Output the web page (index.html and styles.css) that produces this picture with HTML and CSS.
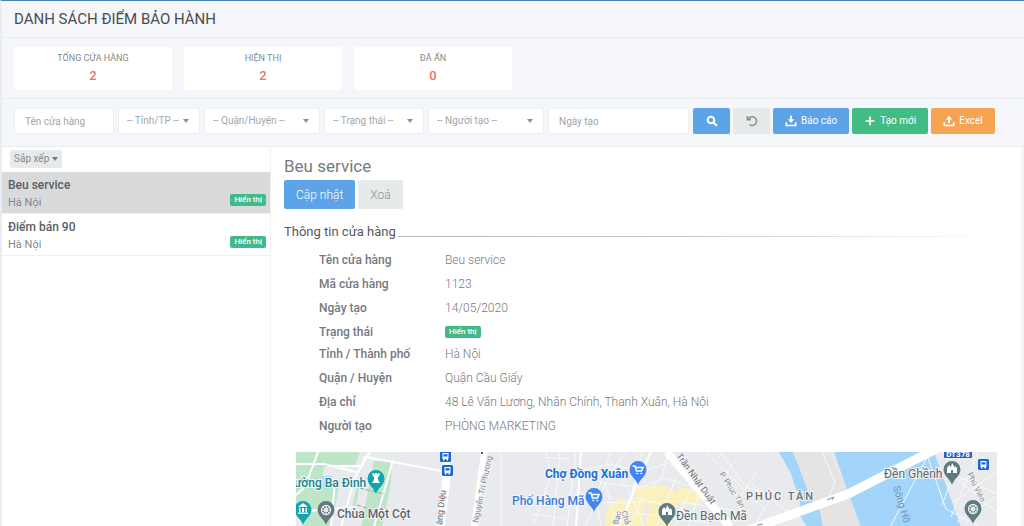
FILE: index.html
```html
<!DOCTYPE html>
<html lang="vi">
<head>
<meta charset="utf-8">
<meta name="viewport" content="width=device-width, initial-scale=1">
<title>Danh sách điểm bảo hành</title>
<link rel="stylesheet" href="styles.css">
</head>
<body>
<div class="app">
  <header class="page-header"><h1>DANH SÁCH ĐIỂM BẢO HÀNH</h1></header>

  <section class="stats">
    <div class="stat"><span class="stat-label">TỔNG CỬA HÀNG</span><strong class="stat-value">2</strong></div>
    <div class="stat"><span class="stat-label">HIỆN THỊ</span><strong class="stat-value">2</strong></div>
    <div class="stat"><span class="stat-label">ĐÃ ẨN</span><strong class="stat-value">0</strong></div>
  </section>

  <form class="filters">
    <input class="field w-100" type="text" placeholder="Tên cửa hàng" aria-label="Tên cửa hàng">
    <span class="select w-82"><select class="field" aria-label="Tỉnh/TP"><option>-- Tỉnh/TP --</option></select></span>
    <span class="select w-116"><select class="field" aria-label="Quận/Huyện"><option>-- Quận/Huyện --</option></select></span>
    <span class="select w-100"><select class="field" aria-label="Trạng thái"><option>-- Trạng thái --</option></select></span>
    <span class="select w-116"><select class="field" aria-label="Người tạo"><option>-- Người tạo --</option></select></span>
    <input class="field w-date" type="text" placeholder="Ngày tạo" aria-label="Ngày tạo">
    <div class="actions">
      <button class="btn btn-blue btn-icon" type="submit" aria-label="Tìm kiếm">
        <svg class="icon" viewBox="0 0 12 12"><circle cx="5" cy="5" r="3.3" fill="none" stroke="currentColor" stroke-width="1.9"/><path d="M7.6 7.6l2.7 2.7" stroke="currentColor" stroke-width="2.2" stroke-linecap="round"/></svg>
      </button>
      <button class="btn btn-gray btn-icon" type="reset" aria-label="Đặt lại">
        <svg class="icon" viewBox="0 0 12 12" fill="none" stroke="currentColor" stroke-width="1.6"><path d="M2.2 4.2A4.4 4.4 0 1 1 3.4 9.6"/><path d="M1.4 1v3.6H5"/></svg>
      </button>
      <button class="btn btn-blue" type="button">
        <svg class="icon" viewBox="0 0 12 12"><path d="M5 .8h2v3.500h2.300L6 7.900 2.700 4.300H5z" fill="currentColor"/><path d="M1.300 7.200v3.300h9.400V7.200" fill="none" stroke="currentColor" stroke-width="1.700"/></svg>Báo cáo
      </button>
      <button class="btn btn-green" type="button">
        <svg class="icon" viewBox="0 0 12 12"><path d="M6 1.500v9M1.500 6h9" stroke="currentColor" stroke-width="1.700"/></svg>Tạo mới
      </button>
      <button class="btn btn-orange" type="button">
        <svg class="icon" viewBox="0 0 12 12"><path d="M5 7.900h2V4.400h2.300L6 .8 2.700 4.400H5z" fill="currentColor"/><path d="M1.300 7.200v3.300h9.400V7.200" fill="none" stroke="currentColor" stroke-width="1.700"/></svg>Excel
      </button>
    </div>
  </form>

  <main class="content">
    <aside class="sidebar">
      <div class="sort"><button class="sort-btn" type="button">Sắp xếp</button></div>
      <ul class="stores">
        <li class="store active"><a class="store-link" href="#beu"><span class="store-name">Beu service</span><span class="store-meta">Hà Nội<span class="badge">Hiển thị</span></span></a></li>
        <li class="store"><a class="store-link" href="#diemban"><span class="store-name">Điểm bán 90</span><span class="store-meta">Hà Nội<span class="badge">Hiển thị</span></span></a></li>
      </ul>
    </aside>

    <section class="detail">
      <h2>Beu service</h2>
      <div class="detail-actions">
        <button class="btn btn-blue btn-lg" type="button">Cập nhật</button>
        <button class="btn btn-gray btn-lg" type="button">Xoá</button>
      </div>
      <h3>Thông tin cửa hàng</h3>
      <dl class="info">
        <div class="row"><dt>Tên cửa hàng</dt><dd>Beu service</dd></div>
        <div class="row"><dt>Mã cửa hàng</dt><dd>1123</dd></div>
        <div class="row"><dt>Ngày tạo</dt><dd>14/05/2020</dd></div>
        <div class="row row-status"><dt>Trạng thái</dt><dd><span class="badge">Hiển thị</span></dd></div>
        <div class="row"><dt>Tỉnh / Thành phố</dt><dd>Hà Nội</dd></div>
        <div class="row"><dt>Quận / Huyện</dt><dd>Quận Cầu Giấy</dd></div>
        <div class="row"><dt>Địa chỉ</dt><dd>48 Lê Văn Lương, Nhân Chính, Thanh Xuân, Hà Nội</dd></div>
        <div class="row"><dt>Người tạo</dt><dd>PHÒNG MARKETING</dd></div>
      </dl>

      <svg class="map" viewBox="0 0 701 75" role="img" aria-label="Bản đồ">
        <defs>
          <path id="pin" d="M0 0C-1-5-8.500-9-8.500-15.500a8.500 8.500 0 0 1 17 0C8.500-9 1-5 0 0z"/>
          <path id="cart" d="M-5-4h2l1.500 5h5L5-2.500h-7.500M-1 3.500h.5M3 3.500h.5" fill="none" stroke="#fff" stroke-width="1.500" stroke-linecap="round"/>
          <g id="bus"><rect width="11" height="11" rx="1.500" fill="#1967d2"/><path d="M2.500 2h6v6h-6zM3 8h1.500v1.500H3zM6.500 8H8v1.500H6.500z" fill="#fff"/><path d="M3.500 3.200h4v2.300h-4z" fill="#1967d2"/></g>
          <g id="temple" fill="#fff"><path d="M-5 3v-5l2-3 2 2 1-4 2 3v2l1-2 2 2v5h-4V0h-2v3z"/></g>
          <g id="wheel" fill="none" stroke="#e9eeee"><circle r="4.500" stroke-width="1.300"/><circle r="1.500"/><path d="M-4.500 0h9M0-4.500v9M-3.200-3.200l6.400 6.400M-3.200 3.200l6.400-6.400"/></g>
        </defs>
        <rect class="land" width="701" height="75"/>
        <g class="park">
          <path d="M0 0h64l-5 14-31 1-9 42-19 2z"/>
          <path d="M78 9h18l-1 21-9 45H65z"/>
          <path d="M0 30h64l-4 26-26 19H8L0 55z"/>
        </g>
        <path d="M25 24h11v10l-6 3-6-5z" fill="#b7dcf5"/>
        <path d="M47 14h18L52 75H35z" fill="#e8eaed"/>
        <g class="sand">
          <path d="M494 0h40l34 75H524l-10-30z"/>
        </g>
        <g class="water">
          <path d="M483 0h14l9 23 9 25 8 6 4 21h-16l-8-13 1-13-9-27z"/>
          <path d="M538 0h100l27 75H565L549 32z"/>
        </g>
        <g class="district">
          <path d="M340 35l28-2 16 10-3 12-42-3zM323 46l26 4-3 25h-37l2-18zM354 54l26 3-6 18h-25zM381 34l29 7-8 13-20-4z"/>
        </g>
        <g class="roads minor">
          <path d="M205 0v75M257 75l7-75M280 0l-9 75M246 5l28 2M250 20l41 1 18 11M240 45l57 6 80-2 60 9M236 62l35 5M305 75l-5-28 14-47M330 0l-15 21-14 27M301 48l-12 27M309 30l12 45M320 18l18 31 10 26M346 0l-5 25-18 50M372 0l-6 25-19 20-14 30M250 0l5 22-17 50M285 18l30-6 31 8 25-9 31 12M307 31l39 4 22-9 40 13M380 26l-20 49M395 36l-17 39M404 39l-12 36M330 60l83 11M340 45l58 17M410 0l59 58M424 0l26 35 27 9M440 8l-17 22M460 20l-17 27M479 39l-21 36M493 61l-37-29M526 0l13 30-7 17M594 75l40-75M630 0l20 57 34 18M647 0l12 26 42 34M665 3l-19 50M682 0l-27 65M701 20l-44 30M701 45l-40 25M640 15l61 27"/>
        </g>
        <g class="roads">
          <path d="M0 12l28 0 32 8M22 0L9 35 0 43M74 0L59 25 45 75M31 14l35 0 3-9 77 14M97 8L78 75M39 30l-4 45M0 60l60-5"/>
          <path d="M320 75l10-15 13-35 12-25M285 0l-5 75"/>
        </g>
        <path class="road-major" d="M150 0l1 20-6 55M371 0l63 75"/>
        <path d="M188 0l-10 75" stroke="#fff" stroke-width="6" fill="none"/>
        <path class="road-bridge" d="M436 84l116-42 92-47"/>
        <path d="M531 48l7-3-2 3M461 73l6-1" stroke="#8b8d91" fill="none"/>
        <path d="M64 36l24 6M61 53l23 7" stroke="#91a58f" stroke-dasharray="4 2"/>

        <g class="labels">
          <text class="label teal" x="-2" y="35">ường Ba Đình</text>
          <text class="label slate" x="41" y="66">Chùa Một Cột</text>
          <text class="label blue bold" x="249" y="26">Chợ Đồng Xuân</text>
          <text class="label blue" x="216" y="53">Phố Hàng Mã</text>
          <text class="label slate light" x="380" y="68">Đền Bạch Mã</text>
          <text class="label slate light" x="588" y="26">Đền Ghềnh</text>
          <text class="label area" x="450" y="48">PHÚC TÂN</text>
          <text class="street dark" transform="translate(146 73) rotate(-84)">àng Diệu</text>
          <text class="street" transform="translate(182 71) rotate(-78)">Nguyễn Tri Phương</text>
          <text class="street dark" transform="translate(380 4) rotate(54)">Trần Nhật Duật</text>
          <text class="street" transform="translate(423 22) rotate(58)">P. Phúc Tân</text>
          <text class="street" transform="translate(325 60) rotate(70)">Chả</text>
          <text class="street" transform="translate(322 73) rotate(-75)">Bạc</text>
          <text class="street river" transform="translate(597 35) rotate(73)">Sông Hồ</text>
          <text class="street" transform="translate(671 22) rotate(64)">Phú Viên</text>
        </g>

        <use href="#bus" x="144" y="-1"/><use href="#bus" x="146" y="13"/><use href="#bus" x="682" y="7"/>
        <path d="M185 0h2v2h-2z" fill="#4c4bd0"/>
        <rect x="648" y="-6" width="28" height="12" rx="1" fill="#2c5fc5"/>
        <text class="shield" x="662" y="5">DT378</text>

        <use href="#pin" x="80" y="42" fill="#12a4af"/><path d="M76.500 21v3l1.500 1v3l-2 3h8l-2-3v-3l1.500-1v-3H82v1.200h-1V21h-2v1.200h-1V21z" fill="#fff"/>
        <use href="#pin" x="7" y="73" fill="#12a4af"/><path d="M2 55l5-4 5 4zM3 56h1.500v4H3zM6 56h2v4H6zM9.500 56H11v4H9.500zM2 60.500h10V62H2z" fill="#fff"/>
        <use href="#pin" x="30" y="73" fill="#667780"/><use href="#wheel" x="30" y="58"/>
        <use href="#pin" x="342" y="33" fill="#4285f4"/><use href="#cart" x="342" y="18"/>
        <use href="#pin" x="298" y="60" fill="#4285f4"/><use href="#cart" x="298" y="45"/>
        <use href="#pin" x="371" y="75" fill="#5d7b80"/><use href="#temple" x="371" y="60"/>
        <use href="#pin" x="656" y="33" fill="#5d7b80"/><use href="#temple" x="656" y="18"/>
        <use href="#pin" x="677" y="72" fill="#5d7b80"/><use href="#wheel" x="677" y="57"/>
      </svg>
    </section>
  </main>
  <span class="edge-tab"></span>
</div>
</body>
</html>
```
FILE: styles.css
```css
* { box-sizing: border-box; }

body {
  margin: 0;
  font-family: Roboto, "Liberation Sans", sans-serif;
  font-size: 12px;
  line-height: 20px;
  color: #85898c;
  background: #f4f6fa;
}

h1, h2, h3, dl, dd, ul { margin: 0; padding: 0; font-weight: 400; }
button, input, select { font: inherit; }

.app {
  position: relative;
  display: flex;
  flex-direction: column;
  height: 100vh;
  overflow: hidden;
  border-top: 1px solid #4584b3;
  border-left: 2px solid #e9edf1;
}

.page-header {
  padding: 6px 12px;
  border-bottom: 1px solid #e9ecf0;
}

h1 {
  font-size: 15px;
  line-height: 24px;
  color: #4a4d50;
}

.stats {
  display: grid;
  grid-template-columns: repeat(6, 1fr);
  gap: 12px;
  padding: 9px 2px 8px 12px;
  border-bottom: 1px solid #e9ecf0;
}

.stat {
  display: flex;
  flex-direction: column;
  align-items: center;
  padding: 2px 0 5px;
  border-radius: 2px;
  background: #fff;
}

.stat-label { font-size: 9px; line-height: 18px; }

.stat-value {
  font-size: 13px;
  font-weight: 500;
  line-height: 18px;
  color: #ed6f79;
}

.filters {
  display: flex;
  gap: 4px;
  padding: 9px 12px 12px;
  border-bottom: 1px solid #e9ecf0;
}

.field {
  width: 100%;
  height: 26px;
  padding: 0 10px;
  border: 1px solid #edf0f3;
  border-radius: 2px;
  background: #fff;
  color: #a3a6a9;
  font-size: 10px;
  appearance: none;
}

.field::placeholder { color: #a3a6a9; opacity: 1; }

.select { position: relative; }
.select .field { padding: 0 0 0 8px; }

.select::after {
  content: "";
  position: absolute;
  top: 11px;
  right: 11px;
  border: 3px solid transparent;
  border-top: 4px solid #8d9194;
  border-bottom: 0;
  pointer-events: none;
}

.w-82 { width: 82px; }
.w-100 { width: 100px; }
.w-116 { width: 116px; }
.w-date { width: 141px; }

.actions { display: flex; gap: 3px; }

.btn {
  display: inline-flex;
  align-items: center;
  justify-content: center;
  gap: 4px;
  height: 26px;
  padding: 0 12px;
  border: 0;
  border-radius: 2px;
  color: #fff;
  font-size: 10px;
  white-space: nowrap;
}

.btn-icon { width: 37px; }
.btn-blue { background: #5da3e8; }
.btn-gray { background: #e6eaeb; color: #8c9193; }
.btn-green { background: #43bb84; }
.btn-orange { background: #f4a453; }
.icon { width: 12px; height: 12px; flex: none; }

.content {
  display: flex;
  flex: 1;
  min-height: 0;
  margin-right: 3px;
  background: #fff;
}

.sidebar {
  width: 269px;
  flex: none;
  border-right: 1px solid #eef0f2;
}

.sort { padding: 3px 8px 4px; }

.sort-btn {
  display: flex;
  align-items: center;
  gap: 3px;
  height: 18px;
  padding: 0 4px;
  border: 0;
  border-radius: 2px;
  background: #e6eaeb;
  color: #85898c;
  font-size: 10px;
}

.sort-btn::after {
  content: "";
  border: 3px solid transparent;
  border-top: 4px solid #777b7e;
  border-bottom: 0;
}

.stores { list-style: none; }
.store { border-bottom: 1px solid #eef0f2; }
.store.active { background: #d9dadb; }

.store-link {
  display: block;
  padding: 4px 4px 2px 6px;
  color: #85898c;
  text-decoration: none;
}

.store-name {
  display: block;
  font-weight: 500;
  line-height: 18px;
  color: #5c6064;
}

.store-meta {
  display: flex;
  justify-content: space-between;
  align-items: center;
  font-size: 11px;
  line-height: 17px;
}

.badge {
  padding: 0 4px;
  border-radius: 2px;
  background: #43b98a;
  color: #fff;
  font-size: 8px;
  font-weight: 500;
  line-height: 12px;
}

.store .badge { align-self: flex-start; }

.detail {
  flex: 1;
  min-width: 0;
  padding: 8px 24px 0 13px;
}

h2 {
  font-size: 17px;
  line-height: 22px;
  color: #777b80;
}

.detail-actions { display: flex; gap: 3px; padding-top: 3px; }
.btn-lg { height: 29px; font-size: 12px; font-weight: 300; }

h3 {
  display: flex;
  align-items: center;
  gap: 2px;
  margin-top: 13px;
  font-size: 13px;
  color: #55595d;
}

h3::after {
  content: "";
  flex: 1;
  height: 1px;
  margin-top: 8px;
  background: linear-gradient(to right, #b3b8ba, #c3cdd2 50%, #fff);
}

.info { padding: 6px 0 14px 35px; }

.row {
  display: grid;
  grid-template-columns: 126px 1fr;
  padding: 2px 0;
}

.row-status { padding-bottom: 0; }
.row-status dd { display: flex; align-items: center; }

dt { font-weight: 500; color: #77787e; }
dd { font-weight: 300; color: #77797c; }

.map {
  display: block;
  width: calc(100% - 12px);
  margin-left: 12px;
}

.land { fill: #e9eaed; }
.park { fill: #bfe5c8; }
.sand { fill: #e6e4e3; }
.water { fill: #a3d5fb; }
.district { fill: #fbf1bd; }
.roads { fill: none; stroke: #fff; stroke-width: 2; }
.roads.minor { stroke: #f8f9fa; stroke-width: 1; }
.road-major { fill: none; stroke: #fff; stroke-width: 8; }
.road-bridge { fill: none; stroke: #fff; stroke-width: 9; }

.labels text { paint-order: stroke; stroke: #f4f5f6; stroke-width: 2; }
.label { font-size: 12px; font-weight: 500; }
.teal { fill: #158592; }
.slate { fill: #5b6670; }
.blue { fill: #3a7de0; }
.light { font-weight: 400; }
.bold { fill: #1a6fe0; font-weight: 700; }
.area { font-size: 11px; fill: #6a6e73; letter-spacing: 2px; }
.street { font-size: 8px; fill: #85898d; }
.dark { font-size: 9px; fill: #6a6e73; }
.labels .river { font-size: 10px; fill: #6f93b5; stroke: none; }
.shield { font-size: 8px; font-weight: 700; fill: #fff; text-anchor: middle; }

.edge-tab {
  position: absolute;
  top: 299px;
  left: -2px;
  width: 2px;
  height: 33px;
  background: #5990b8;
}
```
